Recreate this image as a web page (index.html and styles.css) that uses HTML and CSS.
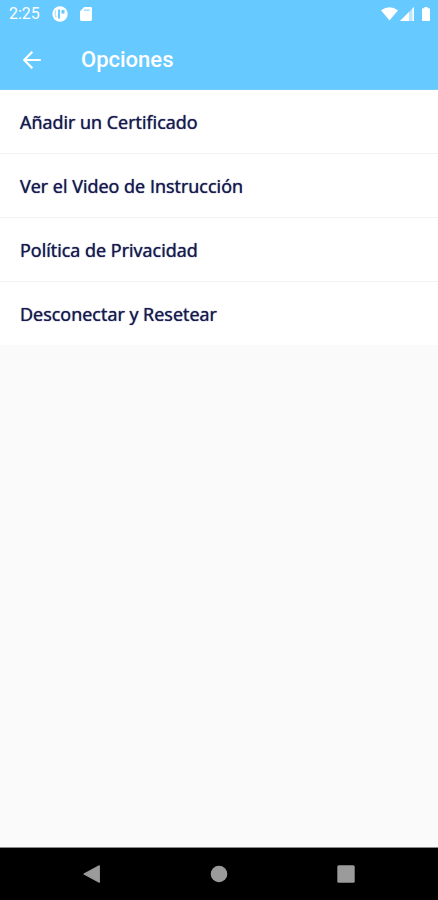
FILE: index.html
```html
<!DOCTYPE html>
<html lang="es">
<head>
<meta charset="utf-8">
<meta name="viewport" content="width=device-width, initial-scale=1">
<title>Opciones</title>
<link rel="stylesheet" href="styles.css">
</head>
<body>
<div class="screen">
  <div class="status">
    <time class="clock">2:25</time>
    <svg class="status-icon" width="16" height="16" viewBox="0 0 16 16" aria-hidden="true">
      <circle cx="8" cy="8" r="7.700" fill="#fff"/>
      <path d="M7 3.400v9.200" stroke="#66c9ff" stroke-width="2" fill="none"/>
      <path d="M3.800 4.500q-1.600 3.500 .6 7" stroke="#66c9ff" stroke-opacity=".5" stroke-width="1.200" fill="none"/>
      <path d="M9.500 4h3v3.600h-3z" fill="#66c9ff"/>
    </svg>
    <svg class="status-icon" width="12" height="14" viewBox="0 0 12 14" aria-hidden="true">
      <path d="M4.200 0H10.600a1.400 1.400 0 0 1 1.400 1.400v11.200a1.400 1.400 0 0 1-1.400 1.400H1.400A1.400 1.400 0 0 1 0 12.600V4.200z" fill="#fff"/>
      <path d="M4 3.200h5.600" stroke="#66c9ff" stroke-opacity=".65" stroke-width="1.500"/>
    </svg>
    <div class="signals">
      <svg width="17" height="14" viewBox="0 0 17 14" aria-hidden="true">
        <path d="M0 3.200Q8.500-2.600 17 3.200L8.500 13.500z" fill="#fff"/>
      </svg>
      <svg width="14" height="14" viewBox="0 0 14 14" aria-hidden="true">
        <path d="M14 0v14H0z" fill="#fff" fill-opacity=".55"/>
        <path d="M9 5v9H0zM12.500 1.500L14 0v14h-1.500z" fill="#fff"/>
      </svg>
      <svg class="battery" width="8" height="14" viewBox="0 0 8 14" aria-hidden="true">
        <path d="M2.400 0h3.200v1.300H7.200a.8.8 0 0 1 .8.800v11.100a.8.8 0 0 1-.8.800H.8a.8.8 0 0 1-.8-.8V2.100a.8.8 0 0 1 .8-.8h1.600z" fill="#fff"/>
      </svg>
    </div>
  </div>
  <header class="appbar">
    <button class="back" type="button" aria-label="Atrás">
      <svg width="18" height="18" viewBox="0 0 18 18" fill="none" stroke="#fff" stroke-width="2.200" aria-hidden="true">
        <path d="M17.800 9H1.600M9.300 .8L1.300 9l8 8.200"/>
      </svg>
    </button>
    <h1 class="title">Opciones</h1>
  </header>
  <main class="content">
    <ul class="options">
      <li><a class="option" href="#certificado">Añadir un Certificado</a></li>
      <li><a class="option" href="#video">Ver el Video de Instrucción</a></li>
      <li><a class="option" href="#privacidad">Política de Privacidad</a></li>
      <li><a class="option" href="#resetear">Desconectar y Resetear</a></li>
    </ul>
  </main>
  <nav class="navbar" aria-label="Sistema">
    <button type="button" aria-label="Volver">
      <svg width="18" height="18" viewBox="0 0 18 18" aria-hidden="true"><path d="M16.300 .8v16.400L1 9z" fill="#9b9b9b" stroke="#9b9b9b" stroke-width="1.200" stroke-linejoin="round"/></svg>
    </button>
    <button type="button" aria-label="Inicio">
      <svg width="18" height="18" viewBox="0 0 18 18" aria-hidden="true"><circle cx="9" cy="9" r="8.300" fill="#9b9b9b"/></svg>
    </button>
    <button type="button" aria-label="Recientes">
      <svg width="18" height="18" viewBox="0 0 18 18" aria-hidden="true"><rect x=".3" y=".3" width="17.400" height="17.400" rx="1.500" fill="#9b9b9b"/></svg>
    </button>
  </nav>
</div>
</body>
</html>
```
FILE: styles.css
```css
* {
  box-sizing: border-box;
}

body {
  margin: 0;
  background: #fafafa;
  font-family: "Open Sans", "Noto Sans", sans-serif;
}

button {
  display: flex;
  align-items: center;
  justify-content: center;
  padding: 0;
  border: 0;
  background: none;
}

.screen {
  display: flex;
  flex-direction: column;
  min-height: 100vh;
}

.status {
  display: flex;
  align-items: center;
  gap: 12px;
  height: 28px;
  padding: 0 8px 0 9px;
  background: #66c9ff;
  color: #fff;
}

.clock {
  font: 400 16px/18px Roboto, sans-serif;
}

.signals {
  display: flex;
  align-items: center;
  gap: 2px;
  margin-left: auto;
}

.battery {
  margin-left: 6px;
}

.appbar {
  display: flex;
  align-items: center;
  gap: 33px;
  height: 62px;
  padding: 2px 16px 0;
  background: #66c9ff;
  border-bottom: 1px solid #7ccefa;
}

.back {
  width: 32px;
  height: 32px;
}

.title {
  margin: 0;
  color: #fff;
  font: 500 22px/30px Roboto, sans-serif;
}

.content {
  flex: 1;
}

.options {
  margin: 0;
  padding: 0;
  list-style: none;
}

.option {
  display: flex;
  align-items: center;
  height: 64px;
  padding: 0 20px;
  border-bottom: 1px solid #f2f2f2;
  background: #fff;
  color: #17194f;
  font-size: 18px;
  font-weight: 500;
  line-height: 24px;
  text-decoration: none;
  text-shadow: 0 0 1px #17194f;
}

.options li:last-child .option {
  border-bottom-color: #fafafa;
}

.navbar {
  display: grid;
  grid-template-columns: repeat(3, 1fr);
  height: 53px;
  padding: 0 29px;
  border-top: 1px solid #8a8a8a;
  background: #000;
}
```
